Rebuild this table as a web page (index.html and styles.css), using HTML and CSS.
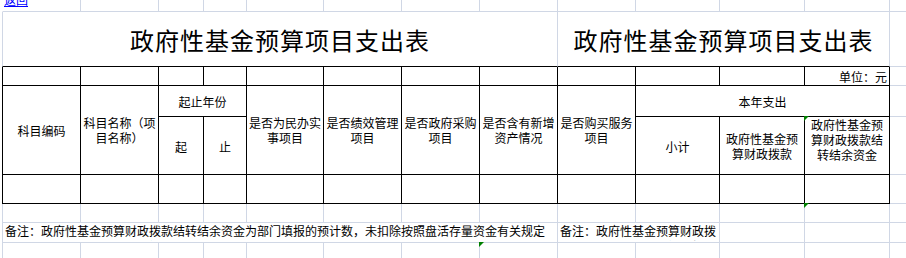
FILE: index.html
```html
<!DOCTYPE html>
<html lang="zh-CN">
<head>
<meta charset="utf-8">
<title>政府性基金预算项目支出表</title>
<link rel="stylesheet" href="styles.css">
</head>
<body>
<div class="sheet">
  <!-- R1 -->
  <div class="c first top"><a class="back" href="#">返回</a></div>
  <div class="c"></div><div class="c"></div><div class="c"></div><div class="c"></div>
  <div class="c"></div><div class="c"></div><div class="c"></div><div class="c"></div>
  <div class="c"></div><div class="c"></div><div class="c"></div><div class="c m"></div>
  <!-- R2 title -->
  <div class="c first title span8 bb">政府性基金预算项目支出表</div>
  <div class="c title span4 bb">政府性基金预算项目支出表</div>
  <div class="c m"></div>
  <!-- R3 -->
  <div class="c f first fl"></div><div class="c f"></div><div class="c f"></div><div class="c f"></div>
  <div class="c f"></div><div class="c f"></div><div class="c f"></div><div class="c f"></div>
  <div class="c f"></div><div class="c f"></div><div class="c f"></div>
  <div class="c f h unit">单位：元</div>
  <div class="c m"></div>
  <!-- R4 -->
  <div class="c f first fl h rs2">科目编码</div>
  <div class="c f h rs2">科目名称（项目名称）</div>
  <div class="c f h span2">起止年份</div>
  <div class="c f h rs2">是否为民办实事项目</div>
  <div class="c f h rs2">是否绩效管理项目</div>
  <div class="c f h rs2">是否政府采购项目</div>
  <div class="c f h rs2">是否含有新增资产情况</div>
  <div class="c f h rs2">是否购买服务项目</div>
  <div class="c f h span3">本年支出</div>
  <div class="c m"></div>
  <!-- R5 -->
  <div class="c f h sub">起</div>
  <div class="c f h sub">止</div>
  <div class="c f h sub">小计</div>
  <div class="c f h">政府性基金预算财政拨款</div>
  <div class="c f h tp"><span class="tri"></span>政府性基金预算财政拨款结转结余资金</div>
  <div class="c m"></div>
  <!-- R6 -->
  <div class="c f first fl"></div><div class="c f"></div><div class="c f"></div><div class="c f"></div>
  <div class="c f"></div><div class="c f"></div><div class="c f"></div><div class="c f"></div>
  <div class="c f"></div><div class="c f"></div><div class="c f"></div><div class="c f"></div>
  <div class="c m"></div>
  <!-- R7 -->
  <div class="c first"></div><div class="c"></div><div class="c"></div><div class="c"></div>
  <div class="c"></div><div class="c"></div><div class="c"></div><div class="c"></div>
  <div class="c"></div><div class="c"></div><div class="c"></div>
  <div class="c tp"><span class="tri"></span></div>
  <div class="c m"></div>
  <!-- R8 notes -->
  <div class="c first note span8"><div class="clip"><div>备注：政府性基金预算财政拨款结转结余资金为部门填报的预计数，未扣除按照盘活存量资金有关规定</div><div>收回的部分，具体以财政部门批复为准。</div></div></div>
  <div class="c note span2"><div class="clip narrow"><div>备注：政府性基金预算财政拨</div><div>款结转结余资金为部门填报的预计数</div></div></div>
  <div class="c"></div><div class="c"></div><div class="c m"></div>
  <!-- R9 -->
  <div class="c first"></div><div class="c"></div><div class="c"></div><div class="c"></div>
  <div class="c"></div><div class="c"></div><div class="c"></div>
  <div class="c tp"><span class="tri"></span></div>
  <div class="c"></div><div class="c"></div><div class="c"></div><div class="c"></div><div class="c m"></div>
</div>
</body>
</html>
```

FILE: styles.css
```css
html, body {
  margin: 0;
  padding: 0;
  background: #fff;
  overflow: hidden;
}
body {
  font-family: "Noto Sans CJK SC", "Noto Sans", sans-serif;
  font-size: 12px;
  color: #000;
}
.sheet {
  margin-left: 2px;
  width: 904px;
  display: grid;
  grid-template-columns: 79px 78px 45px 43px 77px 78px 78px 78px 78px 84px 85px 85px 1fr;
  grid-template-rows: 12px 55px 19px 31px 58px 29px 19px 20px 20px;
}
.c {
  box-sizing: border-box;
  border-right: 1px solid #d0d7e5;
  border-bottom: 1px solid #d0d7e5;
  min-width: 0;
  overflow: hidden;
}
.c.first { border-left: 1px solid #d0d7e5; }
.c.first.top { border-left-color: #fff; }
.c.m { border-right: 0; }
.c.f { border-right-color: #000; border-bottom-color: #000; }
.c.fl { border-left-color: #000; }
.c.bb { border-bottom-color: #000; }

.span8 { grid-column: span 8; }
.span4 { grid-column: span 4; }
.span3 { grid-column: span 3; }
.span2 { grid-column: span 2; }
.rs2 { grid-row: span 2; }

.back {
  display: block;
  margin-top: -6px;
  padding-left: 1px;
  line-height: 12px;
  color: #0000ff;
  text-decoration: underline;
  white-space: nowrap;
}

.title {
  display: flex;
  align-items: center;
  justify-content: center;
  font-size: 24px;
  letter-spacing: 1px;
  line-height: 30px;
  padding-top: 2px;
  white-space: nowrap;
}

.h {
  display: flex;
  align-items: center;
  justify-content: center;
  text-align: center;
  line-height: 15px;
  padding: 0 1px;
}
.sub { padding-top: 2px; }
.unit {
  justify-content: flex-end;
  padding-right: 2px;
}

.tp { position: relative; overflow: visible; }
.h.tp { align-items: flex-start; padding-top: 0; }
.tri {
  position: absolute;
  left: -1px;
  top: -1px;
  width: 0;
  height: 0;
  border-top: 5px solid #008000;
  border-right: 5px solid transparent;
}

.note {
  overflow: visible;
  padding-left: 2px;
}
.note .clip {
  height: 18px;
  overflow: hidden;
  line-height: 16px;
  white-space: nowrap;
}
.note .clip.narrow { width: 157px; }
```
